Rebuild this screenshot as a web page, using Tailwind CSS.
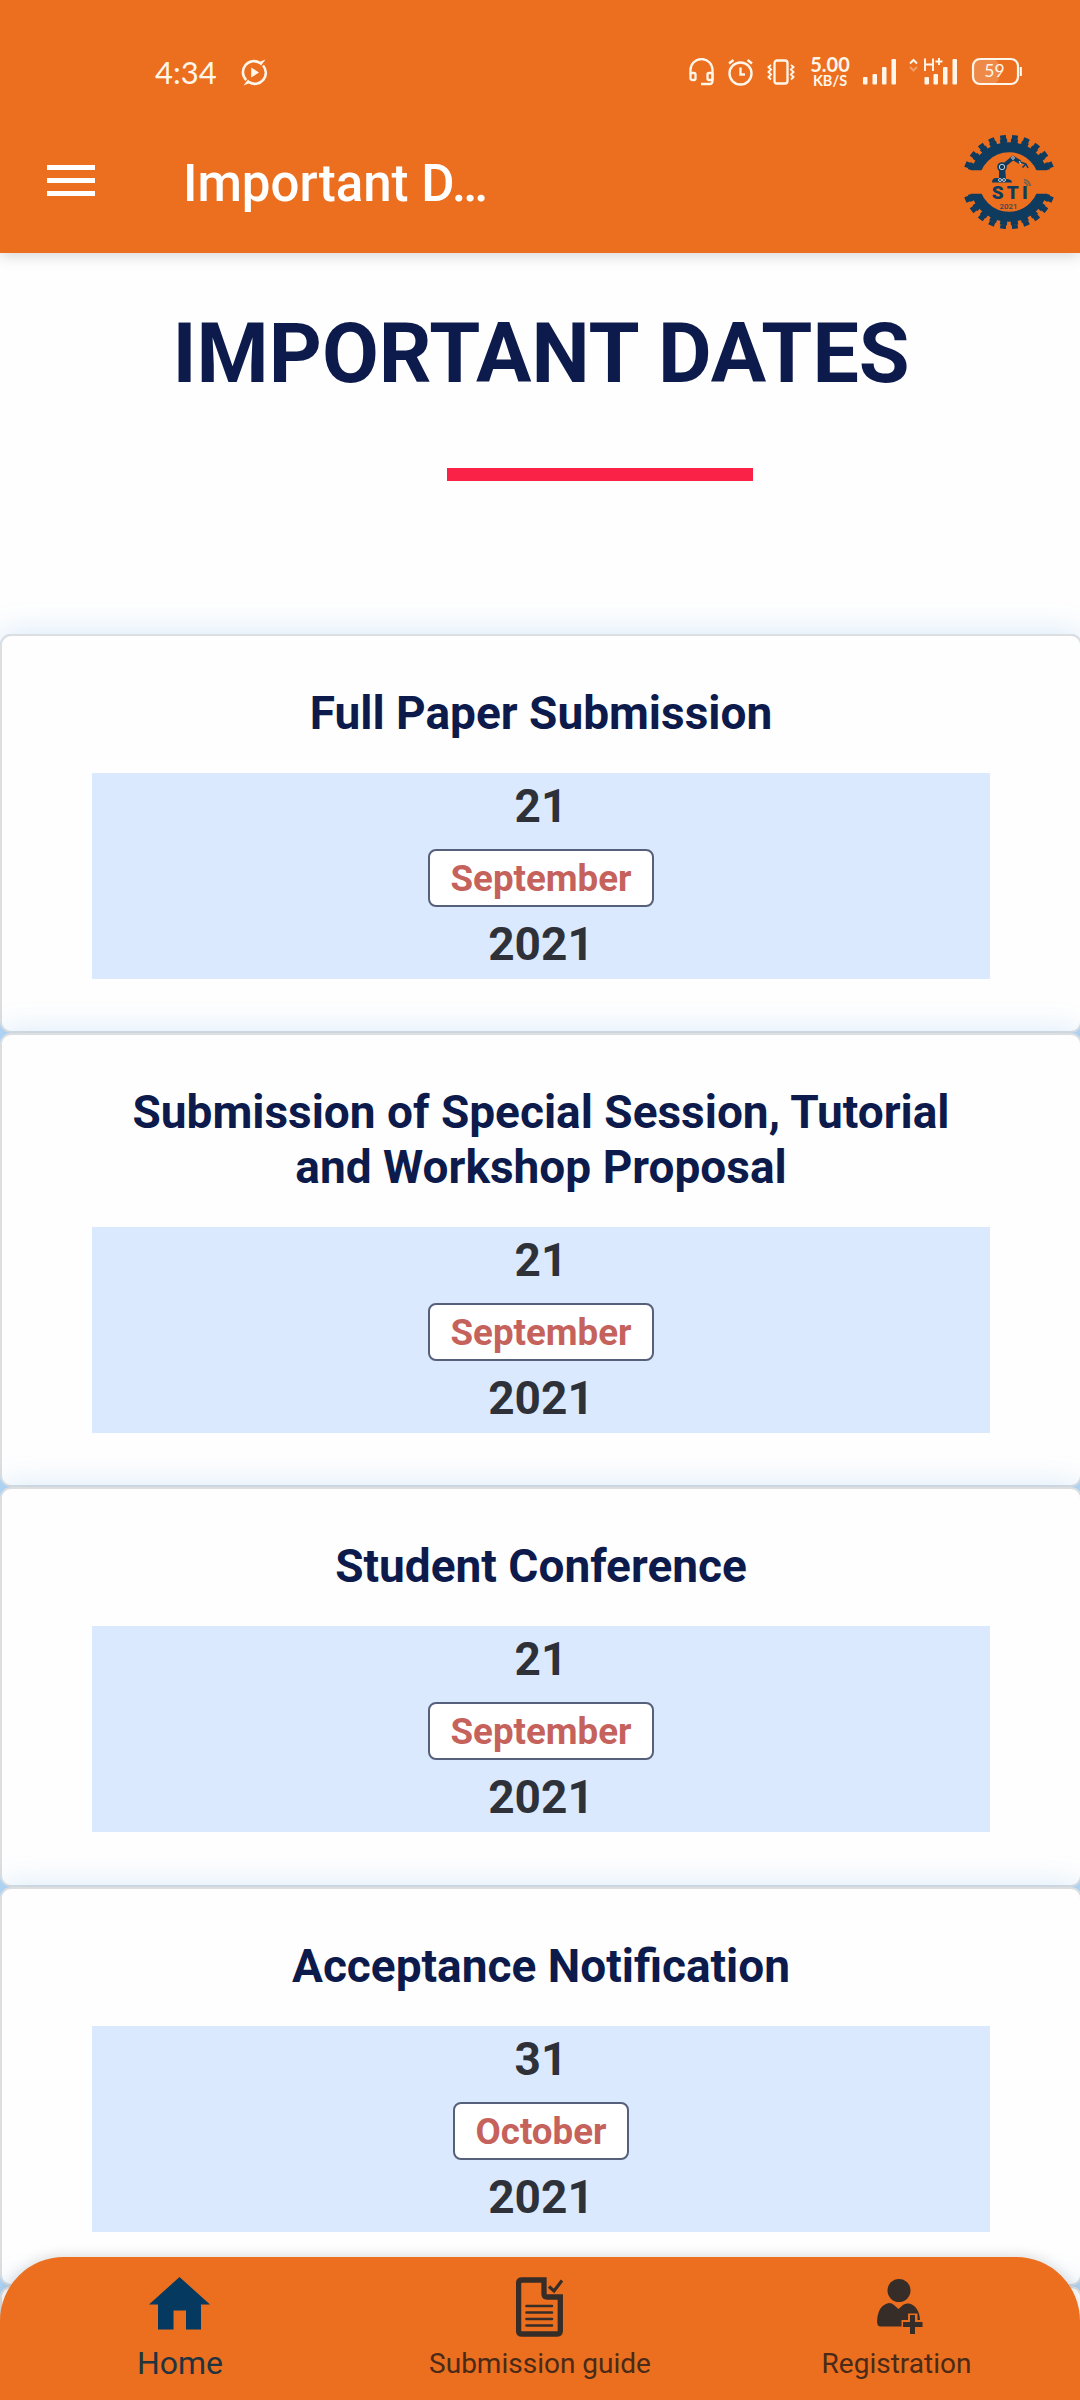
<!DOCTYPE html>
<html lang="en">
<head>
<meta charset="utf-8">
<title>Important Dates</title>
<script src="https://cdn.jsdelivr.net/npm/@tailwindcss/browser@4"></script>
</head>
<body class="bg-white">
<div class="relative flex h-[2400px] w-[1080px] flex-col overflow-hidden bg-[#fefefe] font-[Roboto,sans-serif]">

  <header class="relative z-10 h-[253px] shrink-0 bg-[#eb6f1f] shadow-[0_2px_14px_rgba(0,0,0,0.18)]">
    <!-- status bar -->
    <div class="flex h-[116px] items-end justify-between pr-[58px] pb-[29px] pl-[155px] text-[#fff6ea]">
      <div class="flex h-[30px] items-center">
        <span class="w-[86px] font-[Lato,sans-serif] text-[31px] leading-[30px]">4:34</span>
        <svg class="h-[27px] w-[27px]" viewBox="0 0 27 27" fill="none" stroke="currentColor" stroke-width="2.6">
          <path d="M5.2 21A11 11 0 0 1 19 4"/><path d="M8 23.2A11 11 0 0 0 22 6.5"/>
          <path d="M17 3.5L24.5.5L20 6.5ZM10 23.5L2.5 26.5L7 20.5Z" fill="currentColor" stroke="none"/>
          <path d="M10.2 8.6L18 13.5L10.2 18.4Z" fill="currentColor" stroke="none"/>
        </svg>
      </div>
      <div class="flex h-[30px] items-center">
        <svg class="mr-[14px] h-[28px] w-[25px]" viewBox="0 0 25 28" fill="none" stroke="currentColor" stroke-width="2.3">
          <path d="M1.5 16V12A11 11 0 0 1 23.500 12V23Q23.500 26 20.500 26H12"/><rect x="1.500" y="15" width="5" height="7" rx="1.500"/><rect x="18.500" y="15" width="5" height="7" rx="1.500"/>
        </svg>
        <svg class="mr-[14px] h-[28px] w-[25px]" viewBox="0 0 25 28" fill="none" stroke="currentColor" stroke-width="2.400">
          <circle cx="12.500" cy="15.500" r="11"/><path d="M1 5.500L5.500 2M24 5.500L19.500 2M12.500 9.500V16.500H17"/>
        </svg>
        <svg class="mr-[14px] h-[28px] w-[28px]" viewBox="0 0 28 28" fill="none" stroke="currentColor" stroke-width="2.3">
          <rect x="7.500" y="2.500" width="13" height="23" rx="2.500"/><path stroke-width="1.900" d="M4 7L1.500 9L4 11.500L1.500 14L4 16.500L1.500 19L4 21.500M24 7L26.500 9L24 11.500L26.500 14L24 16.500L26.500 19L24 21.500"/>
        </svg>
        <div class="mr-[12px] flex w-[42px] flex-col items-center font-[Lato,sans-serif] font-bold whitespace-nowrap">
          <span class="text-[20px] leading-[17px]">5.00</span>
          <span class="text-[14.500px] leading-[15px]">KB/S</span>
        </div>
        <svg class="mr-[12px] h-[30px] w-[34px]" viewBox="0 0 34 30" fill="currentColor">
          <rect x="0" y="20" width="4.500" height="7.500" rx="1"/><rect x="9.500" y="17" width="4.500" height="10.500" rx="1"/><rect x="19" y="10" width="4.500" height="17.500" rx="1"/><rect x="28.500" y="2" width="4.500" height="25.500" rx="1"/>
        </svg>
        <svg class="mr-[13px] h-[30px] w-[49px]" viewBox="0 0 49 30" fill="currentColor">
          <path d="M1 6.500L4.500 3L8 6.500" fill="none" stroke="currentColor" stroke-width="2"/><path d="M1 10L4.500 13.500L8 10" fill="none" stroke="currentColor" stroke-opacity=".35" stroke-width="2"/>
          <path d="M16 1.500V14M24 1.500V14M16 7.500H24M30 1V8M26.500 4.500H33.500" fill="none" stroke="currentColor" stroke-width="1.900"/>
          <rect x="15.500" y="20" width="4.500" height="7.500" rx="1"/><rect x="24.500" y="17" width="4.500" height="10.500" rx="1"/><rect x="34" y="10" width="4.500" height="17.500" rx="1"/><rect x="43.500" y="2" width="4.500" height="25.500" rx="1"/>
        </svg>
        <svg class="h-[30px] w-[51px]" viewBox="0 0 51 30" fill="none" stroke="currentColor" stroke-width="2.2">
          <rect x="2" y="2" width="26" height="25" rx="7" fill="currentColor" fill-opacity=".2" stroke="none"/>
          <rect x="2" y="2" width="45" height="25" rx="7"/><path d="M49.800 10V19" stroke-width="2.200"/>
          <text x="23.500" y="20" text-anchor="middle" class="font-[Lato,sans-serif] text-[17.500px]" fill="currentColor" stroke="none">59</text>
        </svg>
      </div>
    </div>
    <!-- app bar -->
    <div class="flex h-[137px] items-start pl-[47px]">
      <svg class="mt-[49px] h-[31px] w-[48px]" viewBox="0 0 48 31" fill="#fff"><path d="M0 0H48V5H0ZM0 13H48V18H0ZM0 26H48V31H0Z"/></svg>
      <h1 class="mt-[38px] ml-[88px] text-[51px] leading-[60px] font-medium text-white">Important D…</h1>
      <svg class="mt-[17px] mr-[24px] ml-auto h-[98px] w-[94px]" viewBox="-47 -49 94 98">
        <defs>
          <clipPath id="halves"><path d="M-49-49H49V-11.700H-49ZM-49 11.700H49V49H-49Z"/></clipPath>
        </defs>
        <g clip-path="url(#halves)" fill="none" stroke="#0f3b5f">
          <circle r="34.800" stroke-width="10"/>
          <g transform="rotate(7.500)">
            <circle r="41.200" stroke-width="4" pathLength="240" stroke-dasharray="6.600 3.400" stroke-dashoffset="3.300"/>
            <circle r="45" stroke-width="4.400" pathLength="240" stroke-dasharray="5 5" stroke-dashoffset="2.500"/>
          </g>
        </g>
        <g stroke="#0f3b5f" fill="#0f3b5f">
          <path d="M-7-15L4-24L11-20" fill="none" stroke-width="4"/>
          <path d="M11-20L17-18M17-18L19-14M17-18L13.500-14.500" fill="none" stroke-width="1.500"/>
          <path d="M-10-14L-4-14L-3-3Q3-3 3 .5H-17Q-17-4-13-4H-10Z" stroke="none"/>
          <circle cx="-7" cy="-15" r="4.800" stroke="none"/>
        </g>
        <g fill="none" stroke="#d7dde2" stroke-width=".9"><circle cx="-7" cy="-15" r="2.700"/><circle cx="4" cy="-24" r="1.300"/><circle cx="-9" cy="-2" r="1.500"/><circle cx="-5" cy="-2" r="1.500"/><path d="M10-21L12-18"/></g>
        <g fill="none" stroke="#6d6154" stroke-width="1.700"><path d="M15 0A6 6 0 0 1 19 4M15-2.500A9 9 0 0 1 21.500 4"/></g>
        <text x=".7" y="17" text-anchor="middle" textLength="36" class="font-[Roboto,sans-serif] text-[19px] font-black" fill="#0f3b5f">STI</text>
        <text x="-.500" y="27" text-anchor="middle" textLength="18" lengthAdjust="spacingAndGlyphs" class="font-[Roboto,sans-serif] text-[7.500px] font-medium" fill="#3b4750">2021</text>
      </svg>
    </div>
  </header>

  <main class="flex flex-col">
    <section class="flex h-[381px] shrink-0 flex-col">
      <h2 class="mt-[51px] w-[1082px] text-center text-[82.500px] leading-[100px] font-bold text-[#0d1b4c]">IMPORTANT DATES</h2>
      <div class="mt-[64px] ml-[447px] h-[13px] w-[306px] bg-[#fa2247]"></div>
    </section>

    <div class="flex w-[1082px] flex-col rounded-t-[11px] bg-[#bcdaf5]">
      <article class="h-[399px] shrink-0 rounded-[11px] border-2 border-[#dcdee0] bg-[#fefefe] px-[90px] pt-[50px] text-center shadow-[0_0_32px_rgba(60,150,230,0.22)]">
        <h3 class="text-[46px] leading-[55px] font-bold text-[#0d1b4c]">Full Paper Submission</h3>
        <div class="mt-[32px] flex h-[206px] flex-col items-center bg-[#dbe9fe] pt-[6px] text-[46px] leading-[55px] font-bold text-[#2e3138]">
          <span>21</span>
          <span class="mt-[15px] mb-[10px] flex h-[58px] items-center rounded-[8px] border-2 border-[#56607a] bg-white px-[21px] text-[36.700px] text-[#c5625c]">September</span>
          <span>2021</span>
        </div>
      </article>
      <article class="h-[454px] shrink-0 rounded-[11px] border-2 border-[#dcdee0] bg-[#fefefe] px-[90px] pt-[50px] text-center shadow-[0_0_32px_rgba(60,150,230,0.22)]">
        <h3 class="text-[46px] leading-[55px] font-bold text-[#0d1b4c]">Submission of Special Session, Tutorial<br>and Workshop Proposal</h3>
        <div class="mt-[32px] flex h-[206px] flex-col items-center bg-[#dbe9fe] pt-[6px] text-[46px] leading-[55px] font-bold text-[#2e3138]">
          <span>21</span>
          <span class="mt-[15px] mb-[10px] flex h-[58px] items-center rounded-[8px] border-2 border-[#56607a] bg-white px-[21px] text-[36.700px] text-[#c5625c]">September</span>
          <span>2021</span>
        </div>
      </article>
      <article class="h-[400px] shrink-0 rounded-[11px] border-2 border-[#dcdee0] bg-[#fefefe] px-[90px] pt-[50px] text-center shadow-[0_0_32px_rgba(60,150,230,0.22)]">
        <h3 class="text-[46px] leading-[55px] font-bold text-[#0d1b4c]">Student Conference</h3>
        <div class="mt-[32px] flex h-[206px] flex-col items-center bg-[#dbe9fe] pt-[6px] text-[46px] leading-[55px] font-bold text-[#2e3138]">
          <span>21</span>
          <span class="mt-[15px] mb-[10px] flex h-[58px] items-center rounded-[8px] border-2 border-[#56607a] bg-white px-[21px] text-[36.700px] text-[#c5625c]">September</span>
          <span>2021</span>
        </div>
      </article>
      <article class="h-[399px] shrink-0 rounded-[11px] border-2 border-[#dcdee0] bg-[#fefefe] px-[90px] pt-[50px] text-center shadow-[0_0_32px_rgba(60,150,230,0.22)]">
        <h3 class="text-[46px] leading-[55px] font-bold text-[#0d1b4c]">Acceptance Notification</h3>
        <div class="mt-[32px] flex h-[206px] flex-col items-center bg-[#dbe9fe] pt-[6px] text-[46px] leading-[55px] font-bold text-[#2e3138]">
          <span>31</span>
          <span class="mt-[15px] mb-[10px] flex h-[58px] items-center rounded-[8px] border-2 border-[#56607a] bg-white px-[21px] text-[36.700px] text-[#c5625c]">October</span>
          <span>2021</span>
        </div>
      </article>
      <article class="h-[400px] shrink-0 rounded-[11px] border-2 border-[#dcdee0] bg-[#fefefe] shadow-[0_0_32px_rgba(60,150,230,0.22)]"></article>
    </div>
  </main>

  <nav class="absolute inset-x-0 bottom-0 z-10 flex h-[143px] rounded-t-[64px] bg-[#eb6f1f] shadow-[0_-1px_14px_rgba(0,0,0,0.14)]">
    <a class="flex w-[360px] flex-col items-center pt-[20px] text-[32px] leading-[40px] text-[#22333f]">
      <svg class="mr-[1px] mb-[13px] h-[53px] w-[61px] shrink-0" viewBox="0 0 61 53" fill="#05395f"><path d="M30.500 0L61 27.500H52V52.500H37V33.500H24.500V52.500H9V27.500H0Z"/></svg>
      Home
    </a>
    <a class="flex w-[360px] flex-col items-center pt-[20px] text-[28px] leading-[40px] text-[#4a2a18]">
      <svg class="mr-[1px] mb-[7px] h-[60px] w-[47px] shrink-0" viewBox="0 0 47 60" fill="none" stroke="#372d28">
        <path d="M28 3H6Q2.600 3 2.600 6.500V54Q2.600 57 6 57H41Q44.300 57 44.300 54V20H31Q28 20 28 17Z" stroke-width="5.300"/>
        <path d="M10.500 29H36M10.500 35.500H36M10.500 42H36M10.500 48.500H36" stroke-width="2.600" stroke-linecap="round"/>
        <path d="M33 9.500L38 14L46 3.500" stroke-width="3.200"/>
      </svg>
      Submission guide
    </a>
    <a class="flex w-[353px] flex-col items-center pt-[22px] text-[28px] leading-[40px] text-[#4a2a18]">
      <svg class="mb-[10px] ml-[6px] h-[55px] w-[46px] shrink-0" viewBox="0 0 46 55" fill="#372d28">
        <circle cx="22" cy="11.500" r="11.500"/>
        <path d="M12 24Q15 24 17 26L21.500 30L26 26Q28 24 32 24.500Q42 27 43 41H40.500V34.500H31V41H24.500V47.500H3Q0 47 0 42Q1 26 12 24Z"/>
        <path d="M33 36H38V43H45.500V48H38V55H33V48H26V43H33Z"/>
      </svg>
      Registration
    </a>
  </nav>
</div>
</body>
</html>
